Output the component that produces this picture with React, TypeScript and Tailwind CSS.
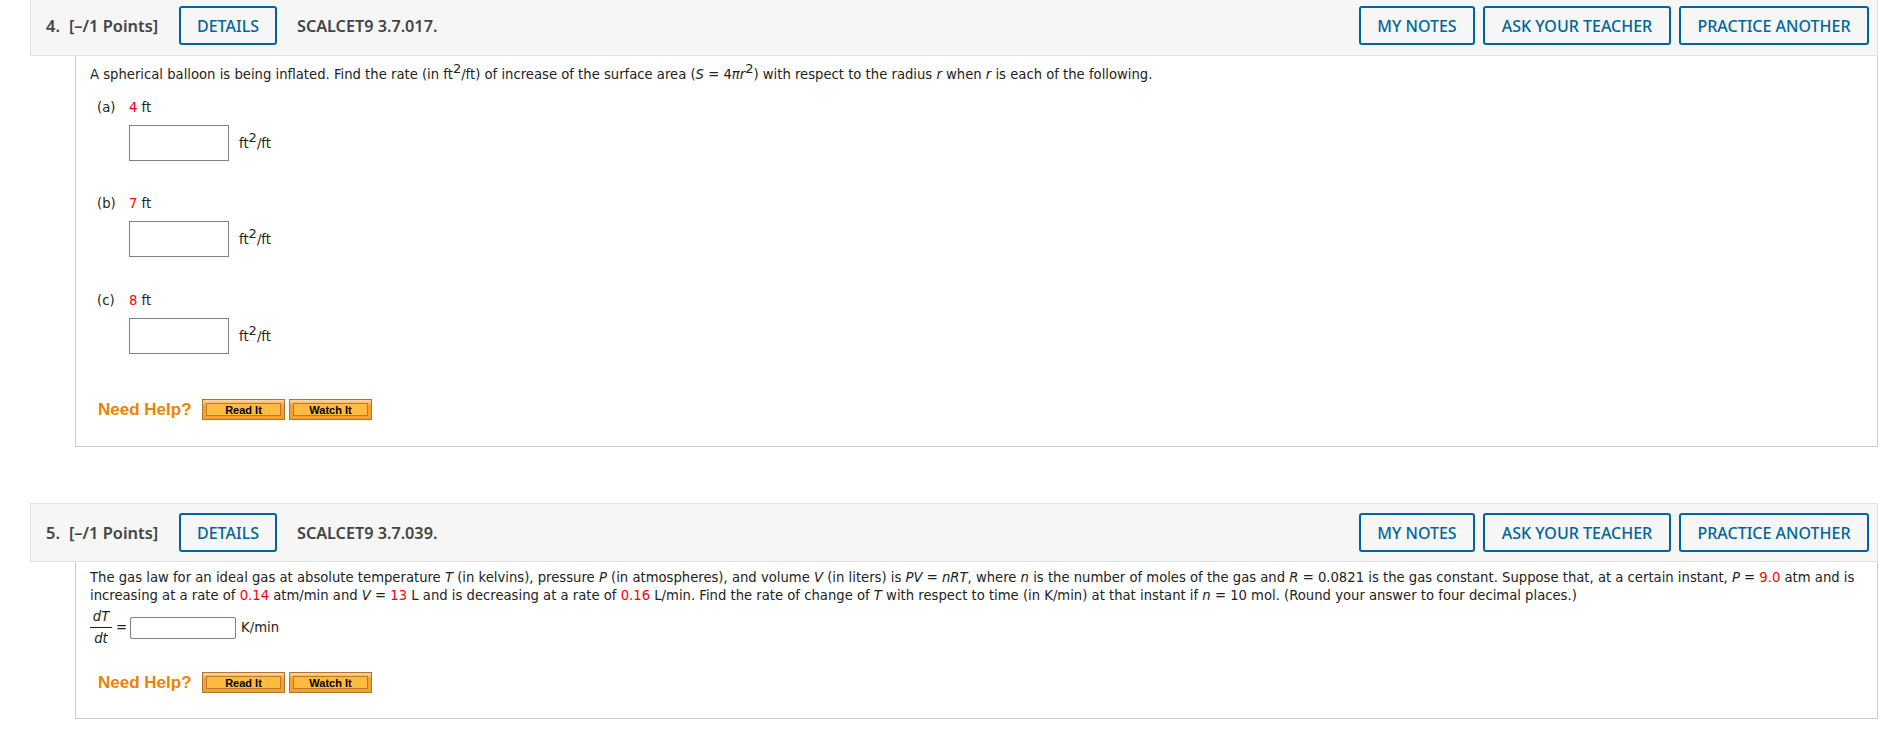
const bodyFont = "font-['DejaVu_Sans',sans-serif]";

const Red = ({ children }: { children: React.ReactNode }) => <span className="text-[#ff0000]">{children}</span>;
const V = ({ children }: { children: React.ReactNode }) => <i>{children}</i>;
const Sup = () => <sup className="top-[-6px] text-[13px] leading-none">2</sup>;

const HeadButton = ({ label, w }: { label: string; w: string }) => (
  <button className={`h-[39px] ${w} shrink-0 rounded-[3px] border-2 border-[#00659c] text-[16px] font-medium text-[#00659c]`}>
    {label}
  </button>
);

const Header = ({ num, code, cls }: { num: number; code: string; cls: string }) => (
  <div className={`flex items-center border border-[#e2e2e2] bg-[#f6f6f6] font-['Noto_Sans',sans-serif] ${cls}`}>
    <span className="ml-[15px] w-[133px] text-[16.4px] font-semibold text-[#444]">
      {num}.<span className="ml-[9px]">[–/1 Points]</span>
    </span>
    <HeadButton label="DETAILS" w="w-[98px]" />
    <span className="ml-[20px] text-[16.2px] font-semibold text-[#444]">{code}</span>
    <div className="ml-auto mr-[8px] flex gap-[8px]">
      <HeadButton label="MY NOTES" w="w-[116px]" />
      <HeadButton label="ASK YOUR TEACHER" w="w-[188px]" />
      <HeadButton label="PRACTICE ANOTHER" w="w-[190px]" />
    </div>
  </div>
);

const HelpButton = ({ label }: { label: string }) => (
  <button className="h-[21px] w-[83px] border border-[#b3742a] bg-[linear-gradient(#fbd9a8,#f7a030_30%)] p-[3px] font-['Liberation_Sans',sans-serif]">
    <span className="flex h-full items-center justify-center border border-[#b87a2c] bg-[#ffba40] text-[11px] font-bold text-black">
      {label}
    </span>
  </button>
);

const NeedHelp = ({ cls }: { cls: string }) => (
  <div className={`flex items-center ${cls}`}>
    <span className="ml-[22px] w-[104px] font-['Liberation_Sans',sans-serif] text-[17px] font-bold text-[#ef8200]">Need Help?</span>
    <div className="flex gap-[4px]">
      <HelpButton label="Read It" />
      <HelpButton label="Watch It" />
    </div>
  </div>
);

const Part = ({ tag, value, cls }: { tag: string; value: number; cls: string }) => (
  <div className={cls}>
    <div className="flex h-[18px] items-center pl-[7px]">
      <span className="w-[32px]">({tag})</span>
      <span>
        <Red>{value}</Red> ft
      </span>
    </div>
    <div className="mt-[8px] flex items-center pl-[39px]">
      <div className="h-[36px] w-[100px] border border-[#808080] bg-white" />
      <span className="ml-[10px] mt-[2px]">
        ft<Sup />/ft
      </span>
    </div>
  </div>
);

export default function App() {
  return (
    <div className={`h-[741px] w-[1892px] overflow-hidden bg-white text-[13.2px] leading-[18px] text-[#222] ${bodyFont}`}>
      <div className="pl-[30px] pr-[14px]">
        <Header num={4} code="SCALCET9 3.7.017." cls="h-[56px] border-t-0 pb-[4px]" />
        <div className="ml-[45px] h-[391px] border-x border-b border-[#cccccc] pl-[14px] pt-[10px]">
          <p>
            A spherical balloon is being inflated. Find the rate (in ft<Sup />/ft) of increase of the surface area (
            <V>S</V> = 4<V>πr</V>
            <Sup />) with respect to the radius <V>r</V> when <V>r</V> is each of the following.
          </p>
          <Part tag="a" value={4} cls="mt-[15px]" />
          <Part tag="b" value={7} cls="mt-[34px]" />
          <Part tag="c" value={8} cls="mt-[35px]" />
          <NeedHelp cls="mt-[45px] -ml-[14px]" />
        </div>

        <Header num={5} code="SCALCET9 3.7.039." cls="mt-[56px] h-[59px]" />
        <div className="ml-[45px] h-[157px] border-x border-b border-[#cccccc] pl-[14px] pr-[10px] pt-[7px]">
          <p>
            The gas law for an ideal gas at absolute temperature <V>T</V> (in kelvins), pressure <V>P</V> (in atmospheres), and volume{" "}
            <V>V</V> (in liters) is <V>PV</V> = <V>nRT</V>, where <V>n</V> is the number of moles of the gas and <V>R</V> = 0.0821 is the
            gas constant. Suppose that, at a certain instant, <V>P</V> = <Red>9.0</Red> atm and is increasing at a rate of <Red>0.14</Red>{" "}
            atm/min and <V>V</V> = <Red>13</Red> L and is decreasing at a rate of <Red>0.16</Red> L/min. Find the rate of change of{" "}
            <V>T</V> with respect to time (in K/min) at that instant if <V>n</V> = 10 mol. (Round your answer to four decimal places.)
          </p>
          <div className="mt-[1px] flex items-center">
            <div className="flex w-[22px] flex-col items-center">
              <i className="leading-[21px]">dT</i>
              <span className="h-px w-full bg-[#222]" />
              <i className="leading-[21px]">dt</i>
            </div>
            <span className="ml-[4px]">=</span>
            <div className="ml-[3px] h-[22px] w-[106px] rounded-[2px] border border-[#808080] bg-white" />
            <span className="ml-[5px]">K/min</span>
          </div>
          <NeedHelp cls="mt-[23px] -ml-[14px]" />
        </div>
      </div>
    </div>
  );
}
